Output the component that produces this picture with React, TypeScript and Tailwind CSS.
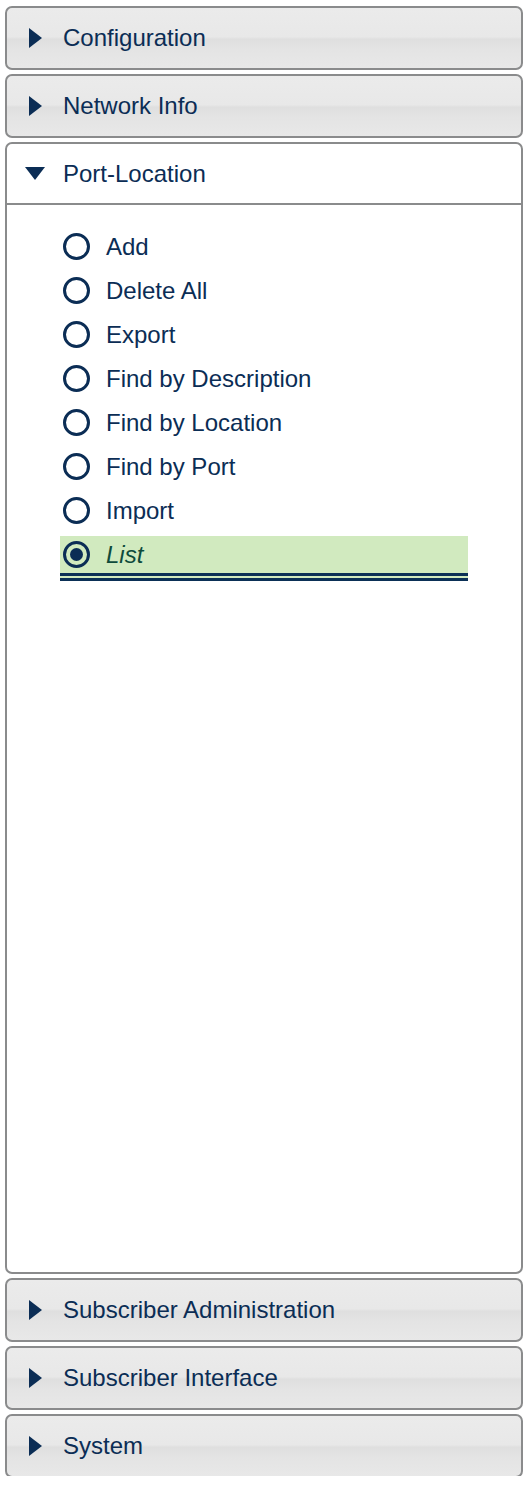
import React from "react";

const NAVY = "#0b2d55";

function RightTri() {
  return (
    <svg width="13" height="20" viewBox="0 0 13 20" className="shrink-0">
      <polygon points="0,0 13,10 0,20" fill={NAVY} />
    </svg>
  );
}

function DownTri() {
  return (
    <svg width="20" height="13" viewBox="0 0 20 13" className="shrink-0">
      <polygon points="0,0 20,0 10,13" fill={NAVY} />
    </svg>
  );
}

function ClosedHeader({ label }: { label: string }) {
  return (
    <div className="h-[64px] shrink-0 rounded-[7px] border-2 border-[#8a8b8c] bg-[linear-gradient(#ebebeb_0%,#e8e8e8_48%,#dfdfdf_52%,#e4e4e4_70%,#e8e8e8_100%)] flex items-center">
      <div className="w-[56px] pl-[22px] flex items-center">
        <RightTri />
      </div>
      <span className="text-[24px] leading-none text-[#0b2d55]">{label}</span>
    </div>
  );
}

const items = [
  "Add",
  "Delete All",
  "Export",
  "Find by Description",
  "Find by Location",
  "Find by Port",
  "Import",
];

function Radio({ checked }: { checked?: boolean }) {
  return (
    <span className="w-[27px] h-[27px] shrink-0 rounded-full border-[3px] border-[#0b2d55] flex items-center justify-center">
      {checked && <span className="w-[13px] h-[13px] rounded-full bg-[#0b2d55]" />}
    </span>
  );
}

export default function App() {
  return (
    <div
      className="w-[526px] h-[1476px] overflow-hidden bg-white pt-[6px] pl-[5px] pr-[3px] flex flex-col gap-[4px]"
      style={{ fontFamily: '"Liberation Sans", Arial, sans-serif' }}
    >
      <ClosedHeader label="Configuration" />
      <ClosedHeader label="Network Info" />
      <div className="h-[1132px] shrink-0 rounded-[7px] border-2 border-[#8a8b8c] bg-white flex flex-col">
        <div className="h-[61px] shrink-0 border-b-2 border-[#8a8b8c] flex items-center">
          <div className="w-[56px] pl-[18px] flex items-center">
            <DownTri />
          </div>
          <span className="text-[24px] leading-none text-[#0b2d55]">Port-Location</span>
        </div>
        <div className="pt-[23px] pl-[53px] flex flex-col gap-[7px]">
          {items.map((it) => (
            <div key={it} className="w-[408px] h-[37px] pl-[3px] flex items-center gap-[16px]">
              <Radio />
              <span className="text-[24px] leading-none text-[#0b2d55]">{it}</span>
            </div>
          ))}
          <div className="w-[408px] h-[45px] pl-[3px] bg-[#d1eabf] border-b-[8px] border-double border-[#0b3056] flex items-center gap-[16px]">
            <Radio checked />
            <span className="text-[24px] leading-none italic text-[#0e4b3b]">List</span>
          </div>
        </div>
      </div>
      <ClosedHeader label="Subscriber Administration" />
      <ClosedHeader label="Subscriber Interface" />
      <ClosedHeader label="System" />
    </div>
  );
}
